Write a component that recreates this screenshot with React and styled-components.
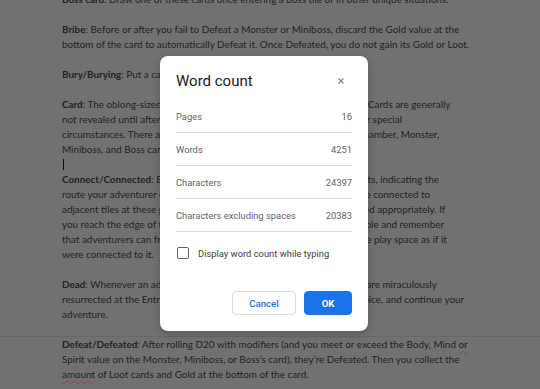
import React from 'react'
import styled, { createGlobalStyle } from 'styled-components'

const GlobalStyle = createGlobalStyle`
  html, body {
    margin: 0;
    padding: 0;
    width: 540px;
    height: 389px;
    overflow: hidden;
    background: #717171;
  }
`

// the document is shown dimmed behind the modal, so its colours are baked in
const Page = styled.div`
  position: relative;
  width: 540px;
  height: 389px;
  overflow: hidden;
  background: #717171;
`

const Doc = styled.div`
  margin-top: -8px;
  padding-left: 62px;
  font-family: Lato, 'Open Sans', sans-serif;
  font-size: 9.9px;
  line-height: 15px;
  color: #232323;
`

const Line = styled.div`
  height: 15px;
  white-space: nowrap;
`

const Blank = styled.div`
  height: 15px;
`

const PageGap = styled.div`
  height: 14px;
  margin-left: -62px;
  width: 540px;
  border-bottom: 1px solid #676767;
`

const Term = styled.b`
  font-weight: 700;
`

const Typo = styled.span`
  text-decoration: underline wavy #8a4650;
  text-decoration-thickness: 1px;
  text-underline-offset: 2px;
`

const Caret = styled.span`
  display: inline-block;
  width: 1px;
  height: 11px;
  margin-top: 2px;
  margin-left: 1px;
  background: #111;
`

const Dialog = styled.div`
  position: absolute;
  top: 56px;
  left: 160px;
  width: 208px;
  box-sizing: border-box;
  background: #ffffff;
  border-radius: 8px;
  padding: 0 16px 16px;
  font-family: Roboto, 'Noto Sans', sans-serif;
  box-shadow: 0 3px 10px rgba(0, 0, 0, 0.2);
`

const Header = styled.div`
  height: 44px;
  display: flex;
  align-items: flex-start;
  justify-content: space-between;
  padding-top: 15px;
  box-sizing: border-box;
`

const Title = styled.div`
  font-size: 15px;
  line-height: 20px;
  color: #202124;
`

const Close = styled.button`
  border: 0;
  background: none;
  padding: 0;
  margin: 7px 8px 0 0;
  width: 6px;
  height: 6px;
  display: flex;
  cursor: pointer;
`

const StatRow = styled.div`
  height: 32px;
  display: flex;
  align-items: center;
  justify-content: space-between;
  border-bottom: 1px solid #dadce0;
  font-size: 9.4px;
  color: #5f6368;
`

const CheckRow = styled.label`
  height: 42px;
  display: flex;
  align-items: center;
  gap: 9px;
  font-size: 9.4px;
  color: #3c4043;
`

const Box = styled.span`
  width: 12px;
  height: 12px;
  box-sizing: border-box;
  border: 1.5px solid #5f6368;
  border-radius: 2px;
  margin-left: 1px;
`

const Actions = styled.div`
  margin-top: 17px;
  display: flex;
  justify-content: flex-end;
  gap: 8px;
`

const Button = styled.button`
  height: 24px;
  width: ${(p) => (p.$primary ? '48px' : '64px')};
  box-sizing: border-box;
  border-radius: 4px;
  border: 1px solid ${(p) => (p.$primary ? '#1a73e8' : '#dadce0')};
  background: ${(p) => (p.$primary ? '#1a73e8' : '#ffffff')};
  color: ${(p) => (p.$primary ? '#ffffff' : '#1a73e8')};
  font-family: Roboto, 'Noto Sans', sans-serif;
  font-size: 9.6px;
  font-weight: ${(p) => (p.$primary ? 700 : 500)};
  padding: 0;
  cursor: pointer;
`

const stats = [
  ['Pages', '16'],
  ['Words', '4251'],
  ['Characters', '24397'],
  ['Characters excluding spaces', '20383'],
]

export default function App() {
  return (
    <Page>
      <GlobalStyle />
      <Doc>
        <Line><Term>Boss card</Term>: Draw one of these cards once entering a boss tile or in other unique situations.</Line>
        <Blank />
        <Line><Term>Bribe</Term>: Before or after you fail to Defeat a Monster or Miniboss, discard the Gold value at the</Line>
        <Line>bottom of the card to automatically Defeat it. Once Defeated, you do not gain its Gold or Loot.</Line>
        <Blank />
        <Line><Term>Bury/Burying</Term>: Put a card at the bottom of its matching deck.</Line>
        <Blank />
        <Line><Term>Card</Term>: The oblong-sized cardboard pieces which come in the game box. Cards are generally</Line>
        <Line>not revealed until after they are drawn from their decks, except in other special</Line>
        <Line>circumstances. There are several types of cards: Entrance, Exit, Boss Chamber, Monster,</Line>
        <Line>Miniboss, and Boss cards.</Line>
        <Line><Caret /></Line>
        <Line><Term>Connect/Connected</Term>: Each tile shows one or more doorways, called exits, indicating the</Line>
        <Line>route your adventurer can take in the dungeon. Each tile’s exits must be connected to</Line>
        <Line>adjacent tiles at these points. After placing, every tile must be connected appropriately. If</Line>
        <Line>you reach the edge of the playing area, just keep placing tiles on the table and remember</Line>
        <Line>that adventurers can freely move between tiles placed anywhere on the play space as if it</Line>
        <Line>were connected to it.</Line>
        <Blank />
        <Line><Term>Dead</Term>: Whenever an adventurer’s health is reduced to zero or less, you are miraculously</Line>
        <Line>resurrected at the Entrance, lose half of your Gold and Loot of your choice, and continue your</Line>
        <Line>adventure.</Line>
        <PageGap />
        <Line><Term>Defeat/Defeated</Term>: After rolling D20 with modifiers (and you meet or exceed the Body, Mind <Typo>or</Typo></Line>
        <Line>Spirit value on the Monster, Miniboss, or Boss’s card), they’re Defeated. Then you collect the</Line>
        <Line><Typo>amount</Typo> of Loot cards and Gold at the bottom of the card.</Line>
      </Doc>
      <Dialog role="dialog" aria-label="Word count">
        <Header>
          <Title>Word count</Title>
          <Close aria-label="Close">
            <svg width="6" height="6" viewBox="0 0 6 6">
              <path d="M0.5 0.5L5.5 5.5M5.5 0.5L0.5 5.5" stroke="#80868b" strokeWidth="1.1" />
            </svg>
          </Close>
        </Header>
        {stats.map(([label, value]) => (
          <StatRow key={label}>
            <span>{label}</span>
            <span>{value}</span>
          </StatRow>
        ))}
        <CheckRow>
          <Box />
          <span>Display word count while typing</span>
        </CheckRow>
        <Actions>
          <Button>Cancel</Button>
          <Button $primary>OK</Button>
        </Actions>
      </Dialog>
    </Page>
  )
}
